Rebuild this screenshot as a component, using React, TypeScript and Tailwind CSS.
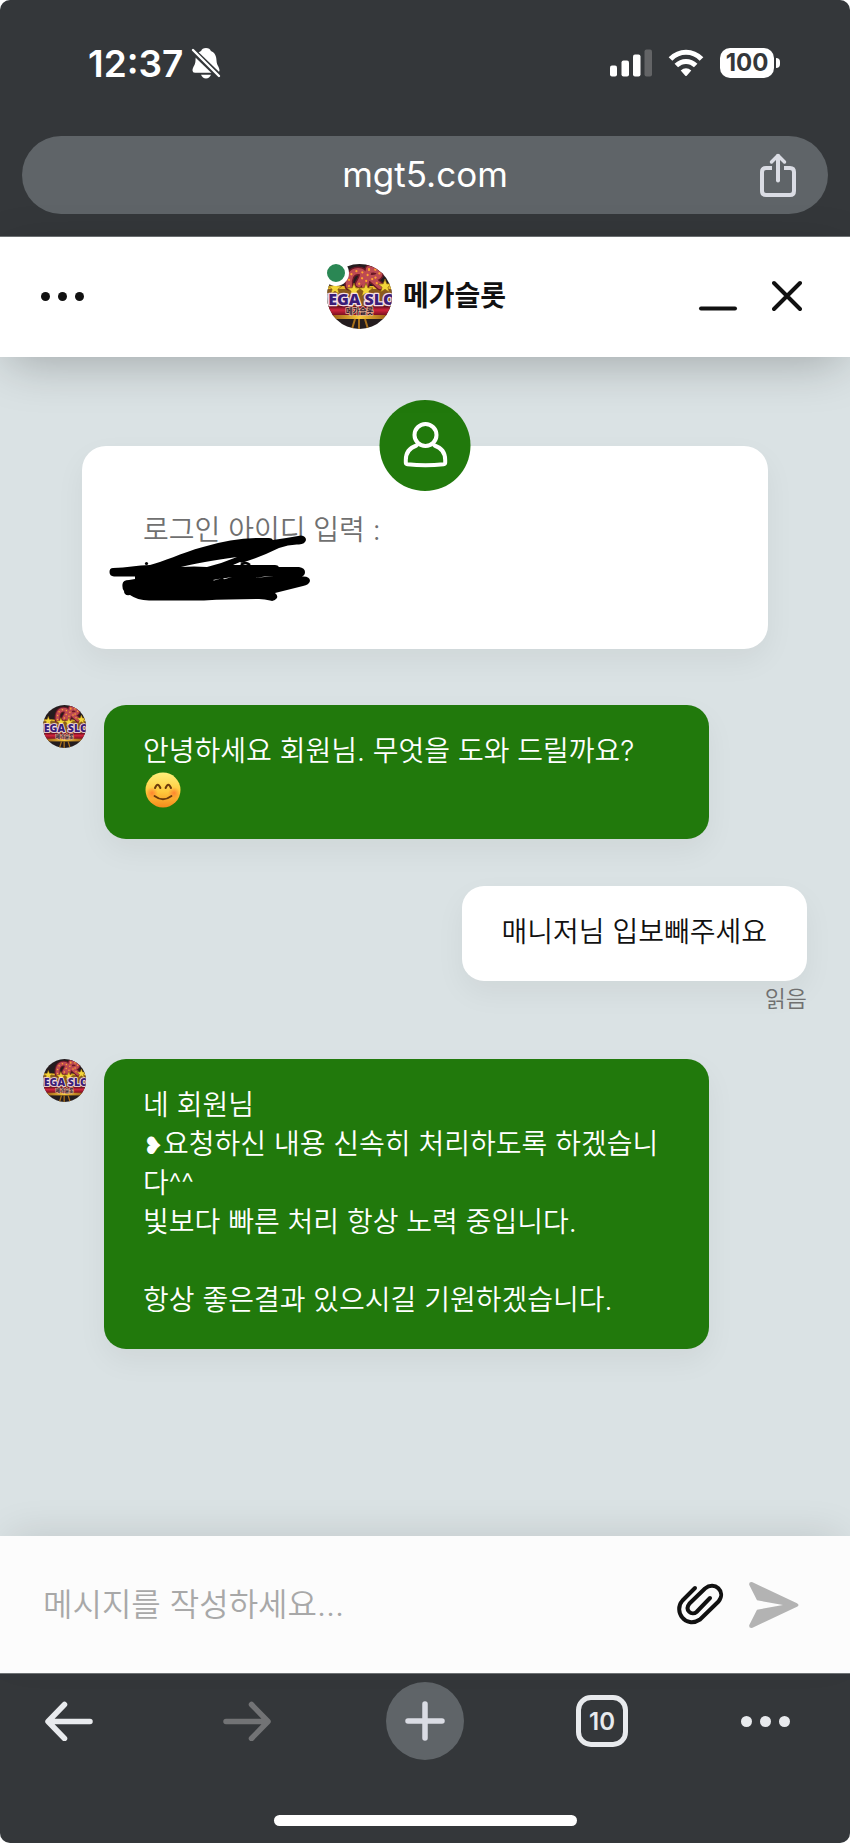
import React from "react";

const FONT = "font-['Inter','Noto_Sans_CJK_KR',sans-serif]";

function Logo({ className, id }: { className: string; id: string }) {
  const star = "M0-7 L1.8-2.2 7-2 2.9 1.2 4.4 6.2 0 3.3 -4.4 6.2 -2.9 1.2 -7-2 -1.8-2.2Z";
  return (
    <svg viewBox="0 0 65 65" className={className} role="img" aria-label="MEGA SLOT">
      <defs>
        <clipPath id={id + "c"}>
          <circle cx="32.5" cy="32.5" r="32.5" />
        </clipPath>
        <linearGradient id={id + "g"} x1="0" y1="0" x2="0" y2="1">
          <stop offset="0" stopColor="#5c0c1c" />
          <stop offset="0.4" stopColor="#d0243c" />
          <stop offset="1" stopColor="#6b0c1c" />
        </linearGradient>
        <linearGradient id={id + "y"} x1="0" y1="0" x2="1" y2="0">
          <stop offset="0" stopColor="#8a4a10" />
          <stop offset="0.5" stopColor="#f8c93c" />
          <stop offset="1" stopColor="#8a4a10" />
        </linearGradient>
      </defs>
      <g clipPath={`url(#${id}c)`}>
        <rect width="65" height="65" fill="#241c1e" />
        <rect y="22" width="65" height="3" fill="#e8bc2c" />
        <rect y="25" width="65" height="19" fill="#8a5a1c" />
        <g fill="none" strokeLinecap="round" strokeLinejoin="round">
          <path
            d="M22 22 C21 14 24 7 31 7 S37 12 32 20 M42 5 L38 22 M42 6 C56 3 55 15 44 14 L53 22"
            stroke="#6a1826"
            strokeWidth="9"
          />
          <path
            d="M22 22 C21 14 24 7 31 7 S37 12 32 20 M42 5 L38 22 M42 6 C56 3 55 15 44 14 L53 22"
            stroke="#bd4a52"
            strokeWidth="6"
          />
          <path
            d="M22 22 C21 14 24 7 31 7 S37 12 32 20 M42 5 L38 22 M42 6 C56 3 55 15 44 14 L53 22"
            stroke="#ffa52e"
            strokeWidth="2.2"
            strokeDasharray="0.1 6"
          />
        </g>
        <g fill="#f4d63a" stroke="#8a5f10" strokeWidth="0.7">
          <path d={star} transform="translate(8 24)" />
          <path d={star} transform="translate(27 26)" />
          <path d={star} transform="translate(39 26)" />
          <path d={star} transform="translate(58 22)" />
        </g>
        <rect y="42" width="65" height="10" fill={`url(#${id}g)`} />
        <rect y="51" width="65" height="4" fill={`url(#${id}y)`} />
        <path d="M25 65 L28 55 M32 65 V55 M41 65 L38 55" stroke="#a8701c" strokeWidth="2" />
        <text
          x="32"
          y="40.5"
          textAnchor="middle"
          fontFamily="Open Sans, sans-serif"
          fontWeight="800"
          fontSize="16"
          fill="#3b1d78"
          stroke="#f7dfe6"
          strokeWidth="2.6"
          strokeLinejoin="round"
          paintOrder="stroke"
        >
          MEGA SLOT
        </text>
        <text
          x="32.5"
          y="49.5"
          textAnchor="middle"
          fontFamily="Noto Sans CJK KR, sans-serif"
          fontWeight="700"
          fontSize="7.5"
          fill="#2b1430"
          stroke="#e8b590"
          strokeWidth="1.4"
          paintOrder="stroke"
        >
          메가슬롯
        </text>
      </g>
    </svg>
  );
}

function StatusBar() {
  return (
    <div className="flex h-[136px] items-center justify-between pt-0 pr-[70px] pb-[10px] pl-[88px]">
      <div className="flex items-center gap-2">
        <span className="pt-0.5 text-[37px] leading-10 font-semibold text-white">12:37</span>
        <svg viewBox="0 0 30 32" className="h-8 w-[30px]" aria-label="무음" role="img">
          <path
            d="M15 1 c2.600 0 4.300 1.100 4.900 3 C24 5.500 25.300 9 25.500 13.500 C25.700 18.500 28.500 20 28.500 23.500 Q28.500 25.700 26 25.700 H4 Q1.500 25.700 1.500 23.500 C1.500 20 4.300 18.500 4.500 13.500 C4.700 9 6 5.500 10.100 4 C10.700 2.100 12.400 1 15 1 Z M10 27.800 H20 Q18.500 31.500 15 31.500 T10 27.800Z"
            fill="#fff"
          />
          <path d="M0 2 L29 30" stroke="#34373a" strokeWidth="6" />
          <path d="M2 3 L28 29" stroke="#fff" strokeWidth="2.400" strokeLinecap="round" />
        </svg>
      </div>
      <div className="flex items-center gap-4">
        <svg viewBox="0 0 42 28" className="h-7 w-[42px]" role="img" aria-label="신호">
          <rect x="0" y="16.500" width="7" height="11" rx="2" fill="#fff" />
          <rect x="11.500" y="11.500" width="7.500" height="16" rx="2" fill="#fff" />
          <rect x="23" y="5.500" width="7.500" height="22" rx="2" fill="#fff" />
          <rect x="34.500" y="0.500" width="7.500" height="27" rx="2" fill="#636466" />
        </svg>
        <svg viewBox="0 0 36 28" className="h-7 w-9" role="img" aria-label="Wi-Fi">
          <path d="M2.500 10 C11.500 1 24.500 1 33.500 10" fill="none" stroke="#fff" strokeWidth="5.200" />
          <path d="M8.300 16.500 C14 11 22 11 27.700 16.500" fill="none" stroke="#fff" strokeWidth="5" />
          <path d="M12.700 21.500 Q18 17 23.300 21.500 L18.700 26.700 Q18 27.500 17.300 26.700Z" fill="#fff" />
        </svg>
        <div className="flex items-center gap-0.5">
          <span className="flex h-[30px] w-[54px] items-center justify-center rounded-[10px] bg-white text-[24px] leading-[30px] font-bold text-[#34373a]">
            100
          </span>
          <span className="h-2.5 w-1 rounded-r-full bg-white" />
        </div>
      </div>
    </div>
  );
}

function AddressBar() {
  return (
    <div className="px-[22px] pb-[22px]">
      <div className="grid h-[78px] grid-cols-[1fr_auto_1fr] items-center rounded-full bg-[#5f6468] px-8">
        <a href="#" className="col-start-2 pb-0.5 text-[35px] leading-10 text-white">
          mgt5.com
        </a>
        <button type="button" aria-label="공유" className="justify-self-end">
          <svg viewBox="0 0 36 44" className="h-11 w-9" fill="none" stroke="#dadce4" strokeWidth="4" strokeLinecap="round" strokeLinejoin="round">
            <path d="M12 16 H6 Q2 16 2 20 V39 Q2 43 6 43 H30 Q34 43 34 39 V20 Q34 16 30 16 H24" strokeLinecap="butt" transform="translate(0 -1)" />
            <path d="M18 27.500 V3" />
            <path d="M11.500 9 L18 2.500 L24.500 9" strokeWidth="3.500" />
          </svg>
        </button>
      </div>
    </div>
  );
}

function ChatHeader() {
  return (
    <header className="relative z-10 grid h-[120px] grid-cols-[1fr_auto_1fr] items-center bg-white pr-12 pb-0.5 pl-[39px] shadow-[0_12px_50px_-8px_rgba(0,0,0,0.28)]">
      <button type="button" aria-label="메뉴" className="flex h-12 items-center gap-2 justify-self-start pl-0.5">
        <span className="size-[9px] rounded-full bg-[#111]" />
        <span className="size-[9px] rounded-full bg-[#111]" />
        <span className="size-[9px] rounded-full bg-[#111]" />
      </button>
      <div className="flex items-center gap-[11px] pr-2">
        <div className="relative">
          <Logo id="head" className="size-[65px]" />
          <span className="absolute -top-1 -left-1 size-[26px] rounded-full border-4 border-white bg-[#2a8754]" />
        </div>
        <h1 className="text-[28px] leading-10 font-bold text-[#111]">메가슬롯</h1>
      </div>
      <div className="flex items-center gap-[34px] justify-self-end">
        <button type="button" aria-label="최소화">
          <svg viewBox="0 0 40 32" className="h-8 w-10">
            <path d="M3 28.500 H37" stroke="#111" strokeWidth="4" strokeLinecap="round" />
          </svg>
        </button>
        <button type="button" aria-label="닫기">
          <svg viewBox="0 0 30 32" className="h-8 w-[30px]">
            <path d="M2 3 L28 29 M28 3 L2 29" stroke="#111" strokeWidth="4" strokeLinecap="round" />
          </svg>
        </button>
      </div>
    </header>
  );
}

function LoginCard() {
  return (
    <section className="relative mx-[39px] rounded-3xl bg-white px-[61px] pt-[65px] pb-[60px] text-[28px] leading-[39px] shadow-[0_12px_30px_rgba(0,0,0,0.05)]">
      <span className="absolute -top-[46px] left-1/2 size-[91px] -translate-x-1/2 rounded-full bg-[#21790c]">
        <svg viewBox="0 0 91 91" className="size-full" fill="none" stroke="#fff" strokeWidth="4" strokeLinecap="round" strokeLinejoin="round">
          <circle cx="46" cy="35" r="11" />
          <path d="M37 45.500 C29.500 48 26.300 53.500 26.300 60 V62.500 Q26.300 64 28 64.300 Q46 66.300 64 64.300 Q65.700 64 65.700 62.500 V60 C65.700 53.500 62.500 48 55 45.500" />
        </svg>
      </span>
      <p className="font-[350] text-[#707070]">로그인 아이디 입력 :</p>
      <p className="h-[39px]" />
      <svg viewBox="0 0 202 70" className="absolute top-[88px] left-[27px] h-[70px] w-[202px]" aria-hidden="true">
        <path
          d="M4 34 C18 34 28 31 41 31 C54 28 72 19 94 13 Q124 4 150 4 L160 4 Q163 4 164 6 Q178 4 192 1.500 Q197 2 197 6 Q196 10 190 10.500 Q180 10 170 14 Q150 24 125 31 L166 31 Q169 31 170 33 L190 33 Q196 34 196 38 Q196 41 193 42.500 Q201 42 201 47 Q200 51 194 52 L166 59 Q169 61 168 64 Q165 68 161 66.500 Q156 65 150 65 Q120 65 95 66.500 H40 Q28 66 21 61 Q15 62 15 57 Q13 55 13.500 50 Q14 46 20 46 L26 45 V42.500 H5 Q0.500 42 0.500 38 Q0.500 34 4 34Z"
          fill="#000"
        />
        <path d="M72 33 Q92 28 128 23 Q114 29 98 33 Q85 32 72 33Z M124 31 L131 28 L136 31Z M146 44 Q156 42 165 42 Q155 43 146 44Z M104 46 L112 44.500 L105 46.500Z M114 44.500 L123 43 L115 45.200Z" fill="#fff" />
        <circle cx="37.500" cy="29.500" r="1.600" fill="#000" />
        <path d="M132 31 Q136 27 141 31" fill="none" stroke="#000" strokeWidth="2.500" />
      </svg>
    </section>
  );
}

function SmileEmoji() {
  return (
    <svg viewBox="0 0 36 36" className="ml-0.5 inline-block size-9 align-[-8px]" role="img" aria-label="😊">
      <defs>
        <linearGradient id="face" x1="0" y1="0" x2="0" y2="1">
          <stop offset="0" stopColor="#fff07a" />
          <stop offset="0.550" stopColor="#ffc93c" />
          <stop offset="1" stopColor="#f58a1c" />
        </linearGradient>
        <radialGradient id="blush">
          <stop offset="0" stopColor="#ff6a2b" stopOpacity="0.700" />
          <stop offset="1" stopColor="#ff6a2b" stopOpacity="0" />
        </radialGradient>
      </defs>
      <circle cx="18" cy="18" r="17.500" fill="url(#face)" />
      <circle cx="7" cy="21" r="6" fill="url(#blush)" />
      <circle cx="29" cy="21" r="6" fill="url(#blush)" />
      <path d="M10 16 Q12.700 9.500 15.400 16 M20.600 16 Q23.300 9.500 26 16" fill="none" stroke="#6b3a0c" strokeWidth="2" strokeLinecap="round" />
      <path d="M9.500 24 Q18 30.500 26.500 24" fill="none" stroke="#6b3a0c" strokeWidth="1.800" strokeLinecap="round" />
    </svg>
  );
}

function AgentMessage({ id, children }: { id: string; children: React.ReactNode }) {
  return (
    <article className="flex items-start gap-[18px] pr-[98px]">
      <Logo id={id} className="size-[43px] shrink-0" />
      <div className="flex-1 rounded-[22px] bg-[#21790c] px-[39px] pt-[27px] pb-[29px] text-[28px] leading-[39px] font-[350] text-white shadow-[0_12px_30px_rgba(0,0,0,0.05)]">
        {children}
      </div>
    </article>
  );
}

function Composer() {
  return (
    <form className="relative z-10 flex h-[137px] items-center bg-[#fcfcfc] pr-[50px] pl-[43px] shadow-[0_-10px_40px_-10px_rgba(0,0,0,0.12)]">
      <input
        type="text"
        aria-label="메시지"
        placeholder="메시지를 작성하세요..."
        className="min-w-0 flex-1 bg-transparent text-[32px] leading-10 font-[350] text-[#111] outline-none placeholder:text-[#a8a8a8]"
      />
      <button type="button" aria-label="파일 첨부" className="mr-6">
        <svg viewBox="0 0 48 44" className="h-11 w-12" fill="none" stroke="#111" strokeWidth="4" strokeLinecap="round" strokeLinejoin="round">
          <path d="M19 5 L6.500 17.500 C-3 28 9.500 46 24 36.500 L42.500 18.500 C50.500 8.500 38.500 -2.500 29 5.500 L13.500 20.500 C8 27.500 16 33 20.500 29 L34 15" />
        </svg>
      </button>
      <button type="submit" aria-label="보내기">
        <svg viewBox="0 0 52 48" className="h-12 w-[52px]">
          <path d="M4.500 1.200 L49 22.200 Q52 24 49 25.800 L4.500 46.800 Q0.500 47.500 1.300 44 L9 28.700 L35 24 L9 19.300 L1.300 4 Q0.500 0.500 4.500 1.200Z" fill="#b3b3b3" />
        </svg>
      </button>
    </form>
  );
}

function BrowserNav() {
  const dot = "size-[11px] rounded-full bg-[#e8eaed]";
  return (
    <footer className="border-t border-[#707476] bg-[#34373a] pt-2 pb-[17px]">
      <nav className="grid grid-cols-[1fr_78px_1fr] items-center">
        <div className="flex items-center justify-between pr-[115px] pl-[45px]">
          <button type="button" aria-label="뒤로">
            <svg viewBox="0 0 48 40" className="h-10 w-12" fill="none" stroke="#e8eaed" strokeWidth="5.500" strokeLinecap="round" strokeLinejoin="round">
              <path d="M45 20.500 H3.500 M19.500 3.500 L3 20.500 L19.500 37.500" />
            </svg>
          </button>
          <button type="button" aria-label="앞으로">
            <svg viewBox="0 0 48 40" className="h-10 w-12" fill="none" stroke="#727375" strokeWidth="5.500" strokeLinecap="round" strokeLinejoin="round">
              <path d="M3 20.500 H44.500 M28.500 3.500 L45 20.500 L28.500 37.500" />
            </svg>
          </button>
        </div>
        <button type="button" aria-label="새 탭" className="flex size-[78px] items-center justify-center rounded-full bg-[#5f6468]">
          <svg viewBox="0 0 40 40" className="size-10" stroke="#dadce4" strokeWidth="5.500" strokeLinecap="round">
            <path d="M20 3 V37 M3 20 H37" />
          </svg>
        </button>
        <div className="flex items-center justify-between pr-[60px] pl-28">
          <button type="button" aria-label="탭 10개" className="flex size-[52px] items-center justify-center rounded-[15px] border-[5px] border-[#e8eaed] pt-0.5 text-[24px] leading-7 font-semibold text-[#e8eaed]">
            10
          </button>
          <button type="button" aria-label="더보기" className="flex h-10 items-center gap-2">
            <span className={dot} />
            <span className={dot} />
            <span className={dot} />
          </button>
        </div>
      </nav>
      <div className="mx-auto mt-[55px] h-[11px] w-[303px] rounded-full bg-white" />
    </footer>
  );
}

export default function App() {
  return (
    <div lang="ko" className={`flex min-h-screen flex-col overflow-hidden rounded-[10px] bg-[#dae2e4] ${FONT}`}>
      <div className="border-b border-[#707476] bg-[#34373a]">
        <StatusBar />
        <AddressBar />
      </div>
      <ChatHeader />
      <main className="flex flex-1 flex-col px-[43px] pt-[89px] pb-16">
        <LoginCard />
        <div className="mt-14">
          <AgentMessage id="m1">
            <p>안녕하세요 회원님. 무엇을 도와 드릴까요?</p>
            <p className="h-[39px]">
              <SmileEmoji />
            </p>
          </AgentMessage>
        </div>
        <article className="mt-[47px] flex flex-col items-end">
          <p className="rounded-[22px] bg-white px-10 pt-[27px] pb-[29px] text-[28px] leading-[39px] font-[350] text-[#111] shadow-[0_12px_30px_rgba(0,0,0,0.05)]">
            매니저님 입보빼주세요
          </p>
          <span className="text-[23px] leading-9 font-[350] text-[#707070]">읽음</span>
        </article>
        <div className="mt-[42px]">
          <AgentMessage id="m2">
            <p>네 회원님</p>
            <p>
              <span className="text-[24px] leading-6">❥</span>요청하신 내용 신속히 처리하도록 하겠습니다^^
            </p>
            <p>빛보다 빠른 처리 항상 노력 중입니다.</p>
            <br />
            <p>항상 좋은결과 있으시길 기원하겠습니다.</p>
          </AgentMessage>
        </div>
      </main>
      <Composer />
      <BrowserNav />
    </div>
  );
}
